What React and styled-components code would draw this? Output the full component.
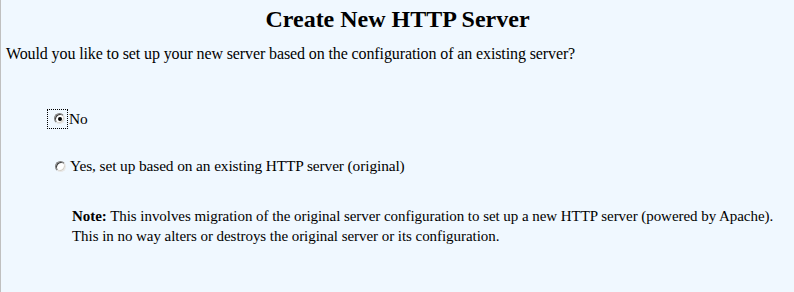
import React from "react";
import styled, { createGlobalStyle } from "styled-components";

const GlobalStyle = createGlobalStyle`
  html, body {
    margin: 0;
    padding: 0;
    background: #f0f8ff;
  }
  body {
    font-family: "Liberation Serif", "Times New Roman", serif;
    color: #000;
  }
`;

const Page = styled.div`
  min-height: 292px;
  box-sizing: border-box;
  border-left: 1px solid #c0c0c0;
  padding: 6px 5px 0 5px;
  font-size: 16px;
  letter-spacing: -0.11px;
`;

const Title = styled.h2`
  margin: 0 0 12px;
  text-align: center;
  font-size: 24px;
  font-weight: bold;
  letter-spacing: 0;
`;

const Question = styled.p`
  margin: 0 0 46px;
`;

const Options = styled.div`
  display: flex;
  flex-direction: column;
  gap: 28px;
  padding-left: 41px;
`;

const Option = styled.label`
  display: flex;
  align-items: center;
  gap: ${(p) => (p.$focused ? 1 : 4)}px;
  padding-left: ${(p) => (p.$focused ? 0 : 8)}px;
  font-size: 15.4px;
`;

const Focus = styled.span`
  display: inline-flex;
  padding: 4px 3px 5px 7px;
  outline: 1px dotted #000;
  outline-offset: -1px;
`;

const Radio = styled.span`
  position: relative;
  box-sizing: border-box;
  width: 11px;
  height: 11px;
  border-radius: 50%;
  border: 1px solid;
  border-color: #808080 #e8e8e8 #e8e8e8 #808080;
  box-shadow: inset 1px 1px 0 #404040, inset -1px -1px 0 #d4d0c8;
  background: #fff;
  flex: none;
  &::after {
    content: "";
    display: ${(p) => (p.$checked ? "block" : "none")};
    position: absolute;
    left: 2.5px;
    top: 2.5px;
    width: 4px;
    height: 4px;
    border-radius: 50%;
    background: #000;
  }
`;

const Note = styled.div`
  padding-left: 66px;
  margin-top: 31px;
  line-height: 20px;
  white-space: nowrap;
  font-size: 15px;
  letter-spacing: -0.05px;
`;

export default function App() {
  return (
    <>
      <GlobalStyle />
      <Page>
        <Title>Create New HTTP Server</Title>
        <Question>
          Would you like to set up your new server based on the configuration of an existing server?
        </Question>
        <Options>
          <Option $focused>
            <Focus>
              <Radio $checked />
            </Focus>
            <span>No</span>
          </Option>
          <Option>
            <Radio />
            <span>Yes, set up based on an existing HTTP server (original)</span>
          </Option>
        </Options>
        <Note>
          <b>Note:</b> This involves migration of the original server configuration to set up a new HTTP server (powered by Apache).
          <br />
          This in no way alters or destroys the original server or its configuration.
        </Note>
      </Page>
    </>
  );
}
